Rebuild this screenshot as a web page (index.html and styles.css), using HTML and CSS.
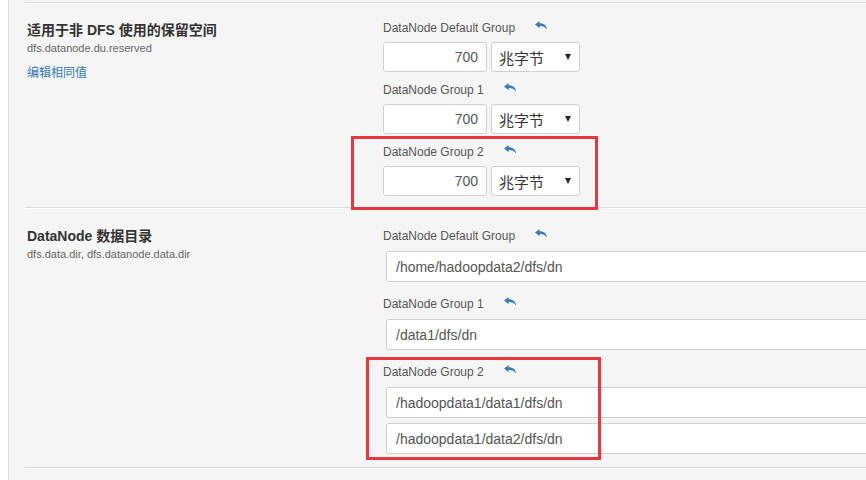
FILE: index.html
```
<!DOCTYPE html>
<html>
<head>
    <meta charset="utf-8">
    <title>Configs</title>
    <link rel="stylesheet" href="styles.css">
</head>
<body>
    <div id="configs">
        <!-- 适用于非 DFS 使用的保留空间 -->
        <div class="config">
            <div class="config-info">
                <p class="config-title">适用于非 DFS 使用的保留空间</p>
                <p class="config-name">dfs.datanode.du.reserved</p>
                <a class="config-link" href="#">编辑相同值</a>
            </div>
            <div class="config-groups">
                <div class="group">
                    <p class="group-label">DataNode Default Group <span class="undo"><svg viewBox="0 0 12 9" width="12" height="9"><path d="M0 3.6 L4.6 0 L4.6 2.2 C8.6 2.2 12 4.4 12 8.6 C10.4 6.1 8.2 5.1 4.6 5.1 L4.6 7.2 Z"/></svg></span></p>
                    <div class="unit-row">
                        <input class="num" type="text" value="700">
                        <div class="select"><span>兆字节</span><i class="caret"></i></div>
                    </div>
                </div>
                <div class="group">
                    <p class="group-label">DataNode Group 1 <span class="undo"><svg viewBox="0 0 12 9" width="12" height="9"><path d="M0 3.6 L4.6 0 L4.6 2.2 C8.6 2.2 12 4.4 12 8.6 C10.4 6.1 8.2 5.1 4.6 5.1 L4.6 7.2 Z"/></svg></span></p>
                    <div class="unit-row">
                        <input class="num" type="text" value="700">
                        <div class="select"><span>兆字节</span><i class="caret"></i></div>
                    </div>
                </div>
                <div class="group">
                    <p class="group-label">DataNode Group 2 <span class="undo"><svg viewBox="0 0 12 9" width="12" height="9"><path d="M0 3.6 L4.6 0 L4.6 2.2 C8.6 2.2 12 4.4 12 8.6 C10.4 6.1 8.2 5.1 4.6 5.1 L4.6 7.2 Z"/></svg></span></p>
                    <div class="unit-row">
                        <input class="num" type="text" value="700">
                        <div class="select"><span>兆字节</span><i class="caret"></i></div>
                    </div>
                </div>
            </div>
            <div class="mark mark-one"></div>
        </div>

        <!-- DataNode 数据目录 -->
        <div class="config config-dirs">
            <div class="config-info">
                <p class="config-title">DataNode 数据目录</p>
                <p class="config-name">dfs.data.dir, dfs.datanode.data.dir</p>
            </div>
            <div class="config-groups">
                <div class="group">
                    <p class="group-label">DataNode Default Group <span class="undo"><svg viewBox="0 0 12 9" width="12" height="9"><path d="M0 3.6 L4.6 0 L4.6 2.2 C8.6 2.2 12 4.4 12 8.6 C10.4 6.1 8.2 5.1 4.6 5.1 L4.6 7.2 Z"/></svg></span></p>
                    <input class="dir" type="text" value="/home/hadoopdata2/dfs/dn">
                </div>
                <div class="group">
                    <p class="group-label">DataNode Group 1 <span class="undo"><svg viewBox="0 0 12 9" width="12" height="9"><path d="M0 3.6 L4.6 0 L4.6 2.2 C8.6 2.2 12 4.4 12 8.6 C10.4 6.1 8.2 5.1 4.6 5.1 L4.6 7.2 Z"/></svg></span></p>
                    <input class="dir" type="text" value="/data1/dfs/dn">
                </div>
                <div class="group">
                    <p class="group-label">DataNode Group 2 <span class="undo"><svg viewBox="0 0 12 9" width="12" height="9"><path d="M0 3.6 L4.6 0 L4.6 2.2 C8.6 2.2 12 4.4 12 8.6 C10.4 6.1 8.2 5.1 4.6 5.1 L4.6 7.2 Z"/></svg></span></p>
                    <input class="dir" type="text" value="/hadoopdata1/data1/dfs/dn">
                    <input class="dir dir-extra" type="text" value="/hadoopdata1/data2/dfs/dn">
                </div>
            </div>
            <div class="mark mark-two"></div>
        </div>
        <div class="config-end"></div>
    </div>
</body>
</html>
```

FILE: styles.css
```
body {
	margin: 0;
	background: #fff;
	font-family: "Liberation Sans", Arial, "Noto Sans CJK SC", sans-serif;
	overflow: hidden;
}

#configs {
	margin-left: 8px;
	border-left: 1px solid #dedede;
	background: #f5f5f5;
	height: 480px;
	padding-top: 2px;
	overflow: hidden;
}

.config {
	position: relative;
	display: flex;
	margin-left: 16px;
	border-top: 1px solid #dddddd;
	box-shadow: inset 0 1px 0 #fff;
	padding: 17px 0 11px 0;
}

.config-dirs {
	padding: 20px 0 13px 0;
}

.config-dirs .config-info {
	margin-top: -2px;
}

.config-end {
	margin-left: 16px;
	border-top: 1px solid #dddddd;
	box-shadow: inset 0 1px 0 #fff;
	height: 2px;
}

.config-info {
	width: 356px;
	padding-left: 2px;
	flex-shrink: 0;
}

.config-title {
	margin: 0;
	font-size: 14px;
	line-height: 20px;
	font-weight: bold;
	color: #333;
}

.config-name {
	margin: 0;
	font-size: 11px;
	line-height: 16px;
	color: #666;
}

.config-link {
	display: block;
	margin-top: 8px;
	font-size: 12px;
	line-height: 18px;
	color: #337ab7;
	text-decoration: none;
}

.config-groups {
	width: 520px;
	flex-shrink: 0;
}

.group {
	margin-bottom: 10px;
}

.group:last-child {
	margin-bottom: 0;
}

.config-dirs .group {
	margin-bottom: 14px;
}

.config-dirs .group:last-child {
	margin-bottom: 0;
}

.group-label {
	margin: 0 0 6px 0;
	font-size: 12px;
	line-height: 16px;
	color: #555;
}

.config-dirs .group-label {
	margin-bottom: 7px;
}

.undo {
	display: inline-block;
	margin-left: 17px;
	vertical-align: 2px;
}

.undo svg {
	display: block;
	fill: #3a7fb3;
}

.unit-row {
	display: flex;
	gap: 4px;
}

input {
	box-sizing: border-box;
	margin: 0;
	border: 1px solid #d0d0d0;
	border-radius: 3px;
	background: #fff;
	font-family: inherit;
	font-size: 14px;
	color: #555;
	outline: none;
}

.num {
	width: 104px;
	height: 30px;
	padding: 0 8px;
	text-align: right;
}

.select {
	box-sizing: border-box;
	width: 89px;
	height: 30px;
	display: flex;
	align-items: center;
	justify-content: space-between;
	padding: 0 8px 0 7px;
	border: 1px solid #d0d0d0;
	border-radius: 3px;
	background: #fff;
	font-size: 15px;
	color: #333;
}

.caret {
	width: 0;
	height: 0;
	border-left: 3.5px solid transparent;
	border-right: 3.5px solid transparent;
	border-top: 6px solid #222;
}

.dir {
	display: block;
	width: 520px;
	height: 31px;
	margin-left: 3px;
	padding: 0 9px;
}

.dir-extra {
	margin-top: 5px;
}

.mark {
	position: absolute;
	z-index: 1;
	border: 3px solid #e8383d;
	box-sizing: border-box;
}

.mark-one {
	left: 326px;
	top: 133px;
	width: 247px;
	height: 74px;
}

.mark-two {
	left: 341px;
	top: 149px;
	width: 235px;
	height: 103px;
}
```
